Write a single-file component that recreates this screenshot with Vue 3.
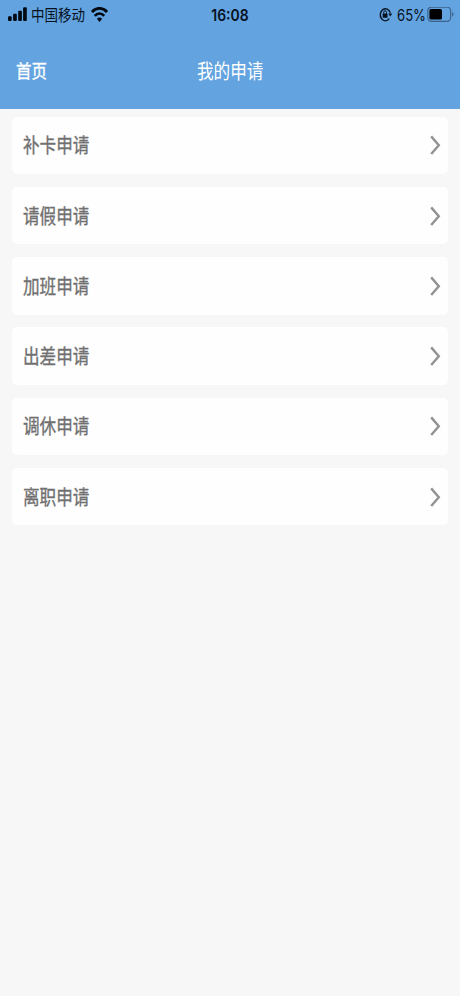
<script setup>
const items = ['补卡申请', '请假申请', '加班申请', '出差申请', '调休申请', '离职申请']
</script>

<template>
  <div class="screen">
    <header class="top">
      <div class="status">
        <div class="left">
          <svg class="signal" width="20" height="15" viewBox="0 0 20 15">
            <rect x="0" y="9.2" width="3.7" height="4.8" rx="1" />
            <rect x="5.1" y="6.7" width="3.7" height="7.3" rx="1" />
            <rect x="10.2" y="3.7" width="3.7" height="10.3" rx="1" />
            <rect x="15.1" y="0.2" width="3.7" height="13.8" rx="1" />
          </svg>
          <span class="carrier"><span class="squeeze">中国移动</span></span>
          <svg class="wifi" width="17" height="16" viewBox="0 0 17 16" fill="none" stroke="#030a12">
            <path d="M1 5C5 .2 12 .2 16 5" stroke-width="2.9" />
            <path d="M3.8 8.9C6.5 5.7 10.5 5.7 13.2 8.9" stroke-width="2.7" />
            <path d="M5.9 11.8Q8.5 9.1 11.1 11.8L8.5 15.1Z" fill="#030a12" stroke="none" />
          </svg>
        </div>
        <span class="time">16:08</span>
        <div class="right">
          <svg class="lock" width="14" height="15" viewBox="0 0 14 15" fill="none" stroke="#07121f">
            <path d="M10.3 11.7A5.1 6 0 1 1 11.2 5.8" stroke-width="1.4" />
            <path d="M9.2 6.4H13.2L11.3 9.4Z" fill="#07121f" stroke="none" />
            <rect x="3.7" y="6.6" width="4.8" height="4.2" rx=".6" fill="#07121f" stroke="none" />
            <path d="M4.7 6.8V5.4a1.4 1.6 0 0 1 2.8 0V6.8" stroke-width="1" />
          </svg>
          <span class="percent"><span class="squeeze">65%</span></span>
          <svg class="battery" width="27" height="16" viewBox="0 0 27 16">
            <rect x=".8" y=".2" width="22.8" height="14.2" rx="3.6" fill="none" stroke="#3c6189" stroke-width="1.1" />
            <rect x="2.4" y="2.1" width="12.6" height="10.4" rx="1.6" fill="#000" />
            <path d="M25.1 4.8Q26.5 5.4 26.5 7.3T25.1 9.8Z" fill="#3c6189" />
          </svg>
        </div>
      </div>
      <nav class="nav">
        <span class="home"><span class="squeeze">首页</span></span>
        <h1 class="title"><span class="squeeze">我的申请</span></h1>
      </nav>
    </header>
    <main class="list">
      <div v-for="item in items" :key="item" class="card">
        <span class="label"><span class="squeeze">{{ item }}</span></span>
        <svg class="arrow" width="11" height="20" viewBox="0 0 11 20">
          <path d="M1.2 1.4L8.8 10.2L1.2 19" fill="none" stroke="#929292" stroke-width="2.4" />
        </svg>
      </div>
    </main>
  </div>
</template>

<style>
body {
  background: #f7f7f7;
}
</style>

<style scoped>
.screen {
  width: 460px;
  height: 996px;
  overflow: hidden;
  background: #f7f7f7;
  font-family: "Noto Sans CJK SC", sans-serif;
}
.top {
  height: 108.5px;
  background: #62a3e0;
}
.status {
  display: grid;
  grid-template-columns: 1fr auto 1fr;
  align-items: center;
  height: 28px;
  padding: 0 6.5px 0 8px;
  color: #07121f;
}
.left,
.right {
  display: flex;
  align-items: center;
}
.right {
  justify-content: flex-end;
}
.signal {
  fill: #030a12;
}
.squeeze {
  display: block;
  white-space: nowrap;
  transform-origin: left center;
}
.carrier {
  width: 54px;
  margin: 0 5.5px 0 3px;
  font-size: 16px;
  line-height: 27px;
}
.carrier .squeeze {
  transform: scaleX(0.844);
}
.time {
  font: 600 16px/28px Inter, sans-serif;
  transform: translateX(-0.5px) scaleX(0.87);
}
.percent {
  width: 28px;
  margin: 1px 2px 0 4px;
  font: 16px/28px Inter, sans-serif;
}
.percent .squeeze {
  transform: scaleX(0.82);
}
.nav {
  display: grid;
  grid-template-columns: 1fr auto 1fr;
  align-items: center;
  height: 84px;
  padding: 0 16px;
  color: #fff;
}
.home {
  font-size: 18px;
  -webkit-text-stroke: 0.35px #fff;
}
.home .squeeze {
  transform: scaleX(0.86);
}
.title {
  width: 66px;
  margin: 0;
  font-size: 20px;
  font-weight: 400;
}
.title .squeeze {
  transform: scaleX(0.83);
}
.list {
  display: flex;
  flex-direction: column;
  gap: 12.8px;
  padding: 8px 12px;
}
.card {
  display: flex;
  align-items: center;
  justify-content: space-between;
  height: 57.5px;
  padding: 0 7.5px 0 11px;
  border-radius: 5px;
  background: #fefefe;
}
.label {
  width: 67px;
  color: #707070;
  font-size: 20px;
  line-height: 56px;
  -webkit-text-stroke: 0.35px #707070;
}
.label .squeeze {
  transform: scaleX(0.83);
}
.arrow {
  display: block;
}
</style>
